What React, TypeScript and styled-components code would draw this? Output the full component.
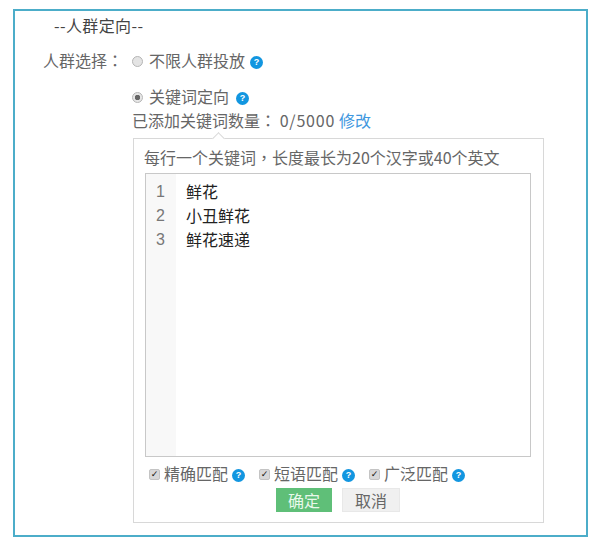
import styled, { createGlobalStyle } from 'styled-components'

const GlobalStyle = createGlobalStyle`
  html, body { margin: 0; padding: 0; background: #fff; }
  body { font-family: "Noto Sans CJK SC", "Liberation Sans", sans-serif; }
`

const Frame = styled.div`
  box-sizing: border-box;
  width: 575px;
  height: 528px;
  margin: 9px 0 0 13px;
  padding: 3px 0 0 0;
  border: 2.5px solid #4cadc9;
  color: #666;
  font-size: 16px;
  line-height: 22px;
`

const Heading = styled.div`
  margin-left: 39px;
  color: #444;
  font-size: 16px;
  letter-spacing: 0.4px;
`

const Row = styled.div`
  display: flex;
  align-items: center;
  margin-top: 12px;
  height: 24px;
`

const RowLabel = styled.div`
  width: 117px;
  box-sizing: border-box;
  padding-left: 28px;
  flex: none;
  white-space: nowrap;
`

// centred full-width punctuation, as in the reference
const Punct = styled.span`
  font-family: "Noto Sans CJK TC", sans-serif;
`

const Option = styled.label<{ $gap?: number }>`
  display: flex;
  align-items: center;
  gap: ${p => p.$gap ?? 5}px;
  white-space: nowrap;
`

const Radio = styled.span<{ $on?: boolean }>`
  box-sizing: border-box;
  width: 11px;
  height: 11px;
  margin: 3px 1px 0 0;
  border-radius: 50%;
  border: 1px solid #b5b5b5;
  background: ${p => (p.$on ? 'radial-gradient(circle, #666 0 2.5px, #e6e6e6 3px)' : '#e4e4e4')};
`

const Help = styled.span<{ $offset?: number }>`
  flex: none;
  width: 13px;
  height: 13px;
  margin: 4px 0 0 ${p => p.$offset ?? 0}px;
  border-radius: 50%;
  background: #1296e0;
  color: #fff;
  font: bold 9px/13px "Liberation Sans", sans-serif;
  text-align: center;
`

const Keywords = styled.div`
  margin: 13px 0 0 117px;
`

const Count = styled.div`
  height: 22px;
  margin-top: 2px;
  white-space: nowrap;
`

const Quota = styled.span`
  letter-spacing: 0.8px;
`

const EditLink = styled.a`
  color: #3f98e0;
  margin-left: 4px;
`

const Popover = styled.div`
  position: relative;
  box-sizing: border-box;
  width: 411px;
  height: 385px;
  margin: 7px 0 0 1px;
  padding: 7px 12px 0 10px;
  border: 1px solid #d8d8d8;
  &::before {
    content: '';
    position: absolute;
    top: -5px;
    left: 80px;
    width: 8px;
    height: 8px;
    background: #fff;
    border-left: 1px solid #d8d8d8;
    border-top: 1px solid #d8d8d8;
    transform: rotate(45deg);
  }
`

const Hint = styled.div`
  white-space: nowrap;
`

const Editor = styled.div`
  box-sizing: border-box;
  display: flex;
  height: 284px;
  margin: 5px 0 0 1px;
  border: 1px solid #c8c8c8;
  color: #222;
  line-height: 24px;
`

const Gutter = styled.div`
  width: 30px;
  flex: none;
  box-sizing: border-box;
  padding: 6px 11px 0 0;
  background: #f8f8f8;
  color: #777;
  text-align: right;
  font-family: "Liberation Sans", sans-serif;
`

const Lines = styled.div`
  padding: 5px 0 0 10px;
`

const MatchRow = styled.div`
  display: flex;
  gap: 14px;
  margin: 5px 0 0 5px;
  height: 22px;
  align-items: center;
`

const Check = styled.span`
  flex: none;
  box-sizing: border-box;
  width: 11px;
  height: 11px;
  margin: 2px 1px 0 0;
  border-radius: 2px;
  background: #d8d8d8;
  border: 1px solid #c4c4c4;
  color: #111;
  font: bold 9px/9px "DejaVu Sans", sans-serif;
  text-align: center;
`

const Actions = styled.div`
  display: flex;
  gap: 10px;
  margin: 4px 0 0 132px;
`

const Button = styled.button<{ $primary?: boolean }>`
  box-sizing: border-box;
  width: ${p => (p.$primary ? 56 : 58)}px;
  height: 24px;
  padding: 0;
  border: 1px solid ${p => (p.$primary ? '#5fbf78' : '#e8e8e8')};
  background: ${p => (p.$primary ? '#5fbf78' : '#f0f0f0')};
  color: ${p => (p.$primary ? '#e8f8ea' : '#666')};
  font-family: inherit;
  font-size: 16px;
  line-height: 20px;
`

const matchTypes = ['精确匹配', '短语匹配', '广泛匹配']

const App = () => {
  return (
    <>
      <GlobalStyle />
      <Frame>
        <Heading>--人群定向--</Heading>
        <Row>
          <RowLabel>人群选择<Punct>：</Punct></RowLabel>
          <Option>
            <Radio />
            不限人群投放
            <Help>?</Help>
          </Option>
        </Row>
        <Keywords>
          <Option>
            <Radio $on />
            关键词定向
            <Help $offset={2}>?</Help>
          </Option>
          <Count>
            已添加关键词数量<Punct>：</Punct> <Quota>0/5000</Quota><EditLink>修改</EditLink>
          </Count>
          <Popover>
            <Hint>每行一个关键词<Punct>，</Punct>长度最长为20个汉字或40个英文</Hint>
            <Editor>
              <Gutter>
                <div>1</div>
                <div>2</div>
                <div>3</div>
              </Gutter>
              <Lines>
                <div>鲜花</div>
                <div>小丑鲜花</div>
                <div>鲜花速递</div>
              </Lines>
            </Editor>
            <MatchRow>
              {matchTypes.map(name => (
                <Option key={name} $gap={3}>
                  <Check>✓</Check>
                  {name}
                  <Help $offset={1}>?</Help>
                </Option>
              ))}
            </MatchRow>
            <Actions>
              <Button $primary>确定</Button>
              <Button>取消</Button>
            </Actions>
          </Popover>
        </Keywords>
      </Frame>
    </>
  )
}

export default App
